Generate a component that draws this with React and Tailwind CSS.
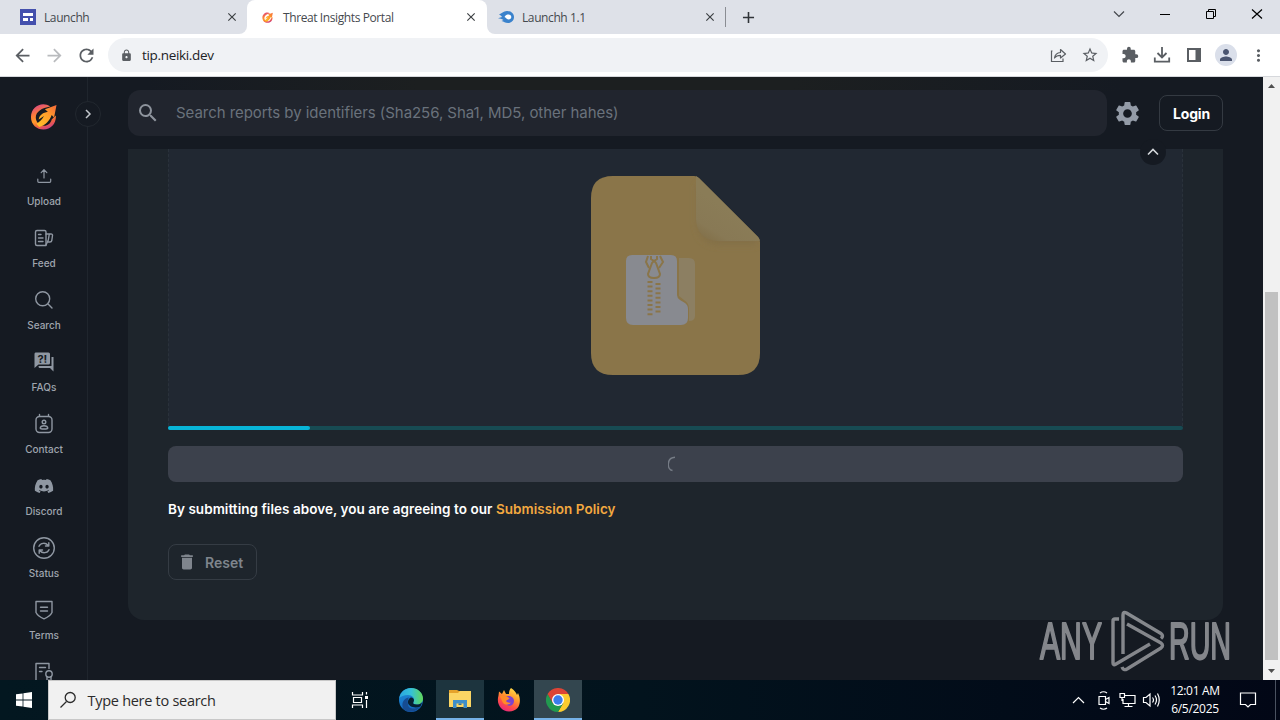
import {
  MdAdd,
  MdArrowBack,
  MdArrowForward,
  MdClose,
  MdDelete,
  MdExtension,
  MdLock,
  MdMoreVert,
  MdPerson,
  MdRefresh,
  MdSearch,
  MdSettings,
  MdStarBorder,
} from "react-icons/md";
import { FaDiscord } from "react-icons/fa";

const strokeProps = {
  fill: "none",
  stroke: "currentColor",
  strokeWidth: 1.4,
  strokeLinecap: "round",
  strokeLinejoin: "round",
};

function BrandMark({ size, id }) {
  return (
    <svg width={size} height={size} viewBox="0 0 28 28" aria-hidden="true">
      <defs>
        <linearGradient id={`${id}-ring`} x1="0.300" y1="0" x2="0.700" y2="1">
          <stop offset="0" stopColor="#dd4a80" />
          <stop offset="0.300" stopColor="#fb7a3c" />
          <stop offset="0.550" stopColor="#ff9a2a" />
          <stop offset="0.750" stopColor="#f0623f" />
          <stop offset="1" stopColor="#c93a8c" />
        </linearGradient>
        <linearGradient id={`${id}-arrow`} x1="0" y1="1" x2="1" y2="0">
          <stop offset="0" stopColor="#ffc229" />
          <stop offset="0.550" stopColor="#ffa02a" />
          <stop offset="1" stopColor="#f4663a" />
        </linearGradient>
      </defs>
      <path
        d="M21 3.500C12.500 -2 1 3.500 1 14.500C1 22.500 7 27.500 14 27.500C22 27.500 27.500 21 26.800 13L22.500 17C21.500 21 18.500 23.500 14.500 23.500C9.500 23.500 6 19.500 6 15C6 9 12 5 21 3.500Z"
        fill={`url(#${id}-ring)`}
      />
      <path
        d="M27.500 2L15.500 6.500L18.500 9C13.500 10 10 12 9 17L14.500 13.500C12.500 17 10 20 6.500 21.500L9.500 25C16 23.500 20.500 18 22.500 12.500L25 15Z"
        fill={`url(#${id}-arrow)`}
      />
    </svg>
  );
}

function SitesIcon() {
  return (
    <svg width="16" height="16" viewBox="0 0 16 16">
      <path d="M0 0H16V16H0Z" fill="#4450ad" />
      <path d="M3 4H13V7H3ZM3 9H8V12H3ZM10 9H13V12H10Z" fill="#fff" />
    </svg>
  );
}

function MediafireIcon() {
  return (
    <svg width="16" height="16" viewBox="0 0 16 16">
      <path
        d="M1 5.500C4 4.500 5 2.200 9 2C13 1.900 16 4.500 16 8C16 11.500 13.300 14 10 14C7 14 6 12.500 3.500 12L5.500 11C3.500 10 2 9.500 0 9.300L4 8C3 6.500 2.500 6 1 5.500Z"
        fill="#3a82cc"
      />
      <path d="M6.500 8C7.500 6 9 5.500 10.500 5.500C12.200 5.500 13.300 6.600 13.300 8C13.300 9.400 12.200 10.500 10.700 10.500C9 10.500 8.500 9 6.500 8Z" fill="#fff" />
    </svg>
  );
}

function Tab({ icon, title, className }) {
  return (
    <div className={`flex h-full items-center ${className}`}>
      <span className="flex w-4 shrink-0 justify-center">{icon}</span>
      <span className="ml-2 flex-1 whitespace-nowrap pt-px text-[12px] tracking-[-0.400px] text-[#45494e]">{title}</span>
      <MdClose className="size-[14px] text-[#3c4043]" />
    </div>
  );
}

function TabStrip() {
  return (
    <div className="flex h-[34px] bg-white">
      <Tab
        icon={<SitesIcon />}
        title="Launchh"
        className="w-[247px] rounded-br-lg bg-[#dee1e8] pl-5 pr-2"
      />
      <div className="h-full w-[240px] bg-[#dee1e8]">
        <Tab
          icon={<BrandMark size={11} id="tab" />}
          title="Threat Insights Portal"
          className="rounded-t-lg bg-white pl-3 pr-[9px]"
        />
      </div>
      <div className="flex flex-1 items-center rounded-bl-lg bg-[#dee1e8]">
        <Tab icon={<MediafireIcon />} title="Launchh 1.1" className="w-[230px] pl-[11px]" />
        <div className="ml-[8px] h-5 w-px bg-[#8a8d93]" />
        <MdAdd className="ml-[13px] size-[19px] text-[#303438]" />
        <div className="ml-auto flex h-7 items-center self-start text-black">
          <svg width="184" height="28" viewBox="0 0 184 28" fill="none" stroke="currentColor">
            <path d="M18 11.500L23 16.500L28 11.500" stroke="#44474c" strokeWidth="1.200" />
            <path d="M64 14.500H74" />
            <path d="M110.500 11.500H117.500V18.500H110.500ZM112.500 11V9.500H119.500V16.500H118" />
            <path d="M156 9.500L166 18.500M166 9.500L156 18.500" strokeWidth="1.200" />
          </svg>
        </div>
      </div>
    </div>
  );
}

function Toolbar() {
  return (
    <div className="flex h-[43px] items-center border-b border-[#d6d8dc] bg-white text-[#5a5e63]">
      <div className="flex w-[108px] items-center gap-[11px] pl-[11.500px]">
        <MdArrowBack className="size-[21px]" />
        <MdArrowForward className="size-[21px] text-[#b9bbbe]" />
        <MdRefresh className="size-[21px]" />
      </div>
      <div className="flex h-[34px] w-[1000px] items-center rounded-full bg-[#f0f2f5] pl-[11.500px] pr-[9px]">
        <MdLock className="size-[13px]" />
        <span className="ml-[9.500px] flex-1 text-[13.500px] tracking-[-0.330px] text-[#202124]">tip.neiki.dev</span>
        <svg width="18" height="18" viewBox="0 0 18 18" fill="none" stroke="currentColor" strokeWidth="1.200">
          <path d="M3.500 5H2.500V15.500H14V12.500" />
          <path d="M5.500 12C6 8.500 8 6.700 11.500 6.500V3.500L16.500 8L11.500 12V9.300C8.800 9.300 7 10 5.500 12Z" strokeLinejoin="round" />
        </svg>
        <MdStarBorder className="ml-[14px] size-[18px]" />
      </div>
      <div className="flex items-center pl-[13px]">
        <MdExtension className="size-[18px]" />
        <svg className="ml-[13px]" width="20" height="20" viewBox="0 0 20 20" fill="none" stroke="currentColor" strokeWidth="1.800">
          <path d="M10 2V12M5.500 8L10 12.500L14.500 8M2.800 12.500V16.700H17.200V12.500" />
        </svg>
        <svg className="ml-[14px]" width="16" height="16" viewBox="0 0 16 16">
          <path d="M1 1H15V15H1ZM3 3V13H9.500V3Z" fill="currentColor" fillRule="evenodd" />
        </svg>
        <span className="ml-[13px] flex size-[22px] items-center justify-center rounded-full bg-[#dadfea] text-[#4b5570]">
          <MdPerson className="size-[18px]" />
        </span>
        <MdMoreVert className="ml-[12px] size-[19px]" />
      </div>
    </div>
  );
}

function UploadIcon() {
  return (
    <svg width="22" height="22" viewBox="0 0 22 22" {...strokeProps} strokeWidth={1.2}>
      <path d="M11 13V5M8.200 7.700L11 4.700L13.800 7.700M4.800 14V16.300Q4.800 17.300 5.800 17.300H16.700Q17.700 17.300 17.700 16.300V14" />
    </svg>
  );
}

function FeedIcon() {
  return (
    <svg width="22" height="22" viewBox="0 0 22 22" {...strokeProps}>
      <path d="M4 3.500H11.500Q13 3.500 13 5V18.500H4Q2.500 18.500 2.500 17V5Q2.500 3.500 4 3.500Z" />
      <path d="M5.500 7.500H8M5.500 11H10M5.500 14.500H10M13 7H18Q19.700 7 19.500 8.500L18.800 13.500Q18.500 15 17 15H14.800M16.300 7L15.300 13L13 18" />
    </svg>
  );
}

function SearchIcon() {
  return (
    <svg width="22" height="22" viewBox="0 0 22 22" {...strokeProps}>
      <path d="M9.700 2.700A7 7 0 1 1 9.700 16.700A7 7 0 1 1 9.700 2.700ZM14.800 14.800L19 19" />
    </svg>
  );
}

function FaqIcon() {
  return (
    <svg width="22" height="22" viewBox="0 0 22 22">
      <path d="M2.500 1.500H15.500Q17 1.500 17 3V12Q17 13.500 15.500 13.500H5.500L1.500 17V3Q1.500 1.500 2.500 1.500Z" fill="currentColor" />
      <path d="M18.500 6H20.500V20.500L17 17H6.500Q5.500 17 5.500 15H18.500Z" fill="currentColor" />
      <text x="9.400" y="11.500" textAnchor="middle" fontSize="11" fontWeight="700" fontFamily="Inter, sans-serif" fill="#161b22">
        ?!
      </text>
    </svg>
  );
}

function ContactIcon() {
  return (
    <svg width="22" height="22" viewBox="0 0 22 22" {...strokeProps}>
      <rect x="3" y="3.500" width="16" height="16" rx="3.500" />
      <path d="M6.500 1.500V3M15.500 1.500V3" />
      <circle cx="11" cy="9" r="1.800" />
      <path d="M7.200 15Q7.500 12.700 11 12.700Q14.500 12.700 14.800 15Q14.500 16 11 16Q7.500 16 7.200 15Z" />
    </svg>
  );
}

function StatusIcon() {
  return (
    <svg width="24" height="24" viewBox="0 0 24 24" {...strokeProps}>
      <circle cx="12" cy="12" r="10.300" />
      <path d="M7 10.300C8.500 6.700 13.500 6.300 16 9.300M16.800 6.700V10H13.500M17 13.700C15.500 17.300 10.500 17.700 8 14.700M7.200 17.300V14H10.500" />
    </svg>
  );
}

function TermsIcon() {
  return (
    <svg width="22" height="22" viewBox="0 0 22 22" {...strokeProps}>
      <path d="M3 2.500H19V13.500Q17 17.500 11 19.800Q5 17.500 3 13.500ZM7.500 8.200H14.500M7.500 12H14.500" />
    </svg>
  );
}

function LicenseIcon() {
  return (
    <svg width="22" height="22" viewBox="0 0 22 22" {...strokeProps}>
      <path d="M9 20.500H3V2.500H16V7.500M6.500 6.500H12.500M6.500 10.500H9" />
      <circle cx="16" cy="13" r="3.200" />
      <path d="M14 15.500V20.500L16 19L18 20.500V15.500" />
    </svg>
  );
}

const navItems = [
  { label: "Upload", icon: <UploadIcon /> },
  { label: "Feed", icon: <FeedIcon /> },
  { label: "Search", icon: <SearchIcon /> },
  { label: "FAQs", icon: <FaqIcon /> },
  { label: "Contact", icon: <ContactIcon /> },
  { label: "Discord", icon: <FaDiscord size={20} /> },
  { label: "Status", icon: <StatusIcon /> },
  { label: "Terms", icon: <TermsIcon /> },
  { label: "", icon: <LicenseIcon /> },
];

function Sidebar() {
  return (
    <aside className="relative z-10 flex w-[88px] shrink-0 flex-col items-center border-r border-[#1f252d] bg-[#151a22] text-[#8f97a2]">
      <div className="flex h-[87px] shrink-0 items-center pb-[8px]">
        <BrandMark size={27} id="side" />
      </div>
      {navItems.map((item, index) => (
        <div key={index} className="flex h-[62px] w-full shrink-0 flex-col items-center">
          <span className="flex h-6 items-center">{item.icon}</span>
          <span className="mt-[6px] pl-px text-[10px] font-medium leading-[14px] text-[#9fa5ae]">{item.label}</span>
        </div>
      ))}
      <button className="absolute -right-[14px] top-6 flex size-[26px] items-center justify-center rounded-full border border-[#22282f] bg-[#151a22]">
        <svg width="12" height="12" viewBox="0 0 12 12" fill="none" stroke="#c3c7cc" strokeWidth="1.500">
          <path d="M4 2L8 6L4 10" />
        </svg>
      </button>
    </aside>
  );
}

function SearchHeader() {
  return (
    <header className="flex h-[72px] items-start bg-[#151a22] bg-[linear-gradient(to_right,transparent_5%,#1c1f20_28%,#1c1f20_60%,transparent_88%)] bg-[length:100%_14px] bg-no-repeat pl-10 pt-[13px]">
      <div className="flex h-[46px] w-[979px] items-center rounded-xl bg-[#21252e] pl-2">
        <MdSearch className="size-6 text-[#8e949d]" />
        <span className="ml-4 text-[15px] tracking-[-0.050px] text-[#6a727c]">
          Search reports by identifiers (Sha256, Sha1, MD5, other hahes)
        </span>
      </div>
      <MdSettings className="ml-[6px] mt-[9px] size-[29px] text-[#939ba7]" />
      <button className="ml-[17px] mt-[5px] h-9 w-16 rounded-lg border border-[#343a42] pl-px text-[14px] font-bold tracking-[-0.150px] text-white">
        Login
      </button>
    </header>
  );
}

function ArchiveFile() {
  return (
    <svg width="169" height="199" viewBox="0 0 169 199">
      <defs>
        <linearGradient id="fold" x1="0.500" y1="0.500" x2="0.200" y2="1">
          <stop offset="0" stopColor="#8a7c57" />
          <stop offset="0.700" stopColor="#887955" />
          <stop offset="1" stopColor="#83714a" />
        </linearGradient>
        <filter id="foldShade" x="-20%" y="-20%" width="140%" height="150%">
          <feGaussianBlur stdDeviation="3" />
        </filter>
        <clipPath id="sheet">
          <path d="M22 0H103Q106 0 108 2L167 61Q169 63 169 66V177Q169 199 147 199H22Q0 199 0 177V22Q0 0 22 0Z" />
        </clipPath>
      </defs>
      <g clipPath="url(#sheet)">
        <path d="M0 0H169V199H0Z" fill="#8a7549" />
        <path d="M106 8V46Q107 69 130 69H165L167 61Z" fill="#837046" filter="url(#foldShade)" />
        <path d="M105 0V43Q106 64 127 65H169V62L106 0Z" fill="url(#fold)" />
      </g>
      <path d="M88 82H98Q104 82 104 88V140Q104 145 98 145V133Q98 127 93 124L88 120Z" fill="#8c7f62" />
      <path
        d="M41 79H80Q86 79 86 85V119Q86 122 89 124L94 127Q97 129 97 133V142Q97 149 90 149H42Q35 149 35 142V85Q35 79 41 79Z"
        fill="#888a90"
      />
      <g fill="none" stroke="#8a7549" strokeWidth="2">
        <path d="M57 80L55 86L58 92M69 80L72 86L68 92M60 80V83L63 85L66 83V80" />
        <path d="M61 87L57 98Q57 102 63 102Q69 102 69 98L65 87Q63 84 61 87Z" />
        <path d="M59 105V141M67 107V139" strokeWidth="5" strokeDasharray="2 2.600" />
      </g>
    </svg>
  );
}

function UploadCard() {
  return (
    <section className="ml-10 flex h-[471px] w-[1095px] flex-col rounded-b-2xl bg-[#1e252c] px-10">
      <div className="flex h-[277px] items-start justify-center border-x border-dashed border-[#2a323b] bg-[#212832] pt-[27px]">
        <ArchiveFile />
      </div>
      <div className="h-1 rounded-sm bg-[#174b53]">
        <div className="h-1 w-[142px] rounded-sm bg-[#08b5d8]" />
      </div>
      <div className="mt-4 flex h-9 items-center justify-center rounded-lg bg-[#3c414c]">
        <svg width="16" height="16" viewBox="0 0 16 16" fill="none" stroke="#767c86" strokeWidth="1.500">
          <path d="M7 1.200C-1.500 1.500 -1.500 13.500 4.500 14.500" />
        </svg>
      </div>
      <p className="mt-[17px] text-[13.500px] font-semibold leading-5 tracking-[0.050px] text-white">
        By submitting files above, you are agreeing to our <a className="text-[#f3a940]">Submission Policy</a>
      </p>
      <button className="mt-[25px] flex h-9 w-[89px] items-center rounded-lg border border-[#353c44] pl-[8px] text-[14px] font-semibold text-[#7f858d]">
        <MdDelete className="size-5" />
        <span className="ml-2">Reset</span>
      </button>
    </section>
  );
}

function Watermark() {
  return (
    <svg className="absolute bottom-[8px] right-[22px]" width="202" height="62" viewBox="0 0 202 62" opacity="0.500" fill="#f2f2f4">
      <g fontSize="51" fontFamily="'Liberation Sans', sans-serif" stroke="#f2f2f4" strokeWidth="2" strokeLinejoin="round">
        <text x="1" y="49" textLength="62" lengthAdjust="spacingAndGlyphs">ANY</text>
        <text x="130" y="49" textLength="62" lengthAdjust="spacingAndGlyphs">RUN</text>
      </g>
      <g fill="none" stroke="#f2f2f4" strokeWidth="3.400" strokeLinejoin="round">
        <path d="M80 9H76Q74 9 74 11V53Q74 56 77 54L111 34" />
        <path d="M84 44V5Q84 1 87.500 3L122 23.500Q125 26 122 28.500" />
        <path d="M88 14L122 33Q125 35.500 122 38L88 59Q84.500 61 83 57" />
      </g>
    </svg>
  );
}

function Scrollbar() {
  return (
    <div className="flex w-[17px] shrink-0 flex-col items-center bg-[#f1f1f1]">
      <svg width="17" height="17" viewBox="0 0 17 17">
        <path d="M5 11L8.500 7L12 11Z" fill="#505050" />
      </svg>
      <div className="mt-[198px] h-[368px] w-[13px] bg-[#c1c1c1]" />
      <svg className="mt-auto" width="17" height="17" viewBox="0 0 17 17">
        <path d="M5 6L8.500 10L12 6Z" fill="#505050" />
      </svg>
    </div>
  );
}

function TaskViewIcon() {
  return (
    <svg width="18" height="18" viewBox="0 0 18 18" fill="none" stroke="#fff" strokeWidth="1.200">
      <path d="M1.500 1V4H11.500V1M1.500 17V14H11.500V17M2.500 6.500H10.500V11.500H2.500ZM15.500 1V3.500M15.500 9V17" />
      <path d="M14 5H17V8H14Z" fill="#fff" stroke="none" />
    </svg>
  );
}

function EdgeIcon() {
  return (
    <svg width="24" height="24" viewBox="0 0 24 24">
      <defs>
        <linearGradient id="edgeTop" x1="0" y1="0.500" x2="1" y2="0.500">
          <stop offset="0" stopColor="#2aa5e0" />
          <stop offset="0.500" stopColor="#35c1d8" />
          <stop offset="1" stopColor="#62d957" />
        </linearGradient>
        <linearGradient id="edgeSide" x1="0" y1="0" x2="0.300" y2="1">
          <stop offset="0" stopColor="#1f8fd8" />
          <stop offset="1" stopColor="#1467c0" />
        </linearGradient>
      </defs>
      <circle cx="12" cy="12" r="12" fill="url(#edgeSide)" />
      <path d="M9 16C9 21 15 22 21.500 18.500C17 25 8 25.500 4 20.500C2 15 5 10 10 9.500C8.500 11.500 8.500 14 9 16Z" fill="#164c92" />
      <path d="M0.200 10C1.500 3.500 6.500 0 12 0C19 0 24 5 24 10.500C24 14.500 21 16.500 17.500 16.500C14.500 16.500 13.500 15.500 14.500 14C16.500 10 13 7 9 7C5 7 1.500 8.500 0.200 10Z" fill="url(#edgeTop)" />
      <path d="M14.500 14C13.500 15.500 14.500 16.500 17.500 16.500C20 16.500 22 15.700 23.200 14.200L21.500 18.500C16 20.500 10 19 9 15C8.600 12 10.500 9.500 12.500 9.500C15 10 15.500 12 14.500 14Z" fill="#071f31" />
    </svg>
  );
}

function ExplorerIcon() {
  return (
    <svg width="22" height="20" viewBox="0 0 22 20">
      <path d="M0 1H8L10 2H22V6H0Z" fill="#e5a32c" />
      <path d="M0 4L9 4L11 2H22V18H0Z" fill="#fbd564" />
      <path d="M4 11H18V19H14.500V14.500H7.500V19H4Z" fill="#3d8ecb" />
      <path d="M9.500 14.500H12.500V16H9.500Z" fill="#2d6da1" />
    </svg>
  );
}

function FirefoxIcon() {
  return (
    <svg width="24" height="24" viewBox="0 0 24 24">
      <defs>
        <linearGradient id="fox" x1="0.800" y1="0" x2="0.300" y2="1">
          <stop offset="0" stopColor="#ffe34a" />
          <stop offset="0.400" stopColor="#ff9a2e" />
          <stop offset="0.700" stopColor="#ff4f45" />
          <stop offset="1" stopColor="#e9257d" />
        </linearGradient>
      </defs>
      <path d="M14 0C17 2 19 4 20 7L21 5C25 13 23 23.500 12 23.500C4 23.500 -1 16 1.500 7.500L2 3.500L5 6L7 2L9 6L12 6C12 3.500 12.500 1.500 14 0Z" fill="url(#fox)" />
      <path d="M8 9C11 7 17 8 17 13C17 17 13.500 18.500 11 17.500C8 16.500 7 14.500 7 12L11 12Z" fill="#7a42d0" />
      <path d="M3 8C7 6.500 10 8 12.500 10.500C11 12 10 11.500 9 13C10 14.500 12 15 14 14.500C11.500 18 7 17 5.500 14Z" fill="#ff8b27" />
    </svg>
  );
}

function ChromeIcon() {
  return (
    <svg width="24" height="24" viewBox="0 0 24 24">
      <path d="M12 6H22.400A12 12 0 0 1 12 24L17.200 15Z" fill="#fccb2f" />
      <path d="M1.600 6L6.800 15L12 18L17.200 15L12 24A12 12 0 0 1 1.600 6Z" fill="#22994f" />
      <path d="M22.400 6A12 12 0 0 0 1.600 6L6.800 15L12 6Z" fill="#dd4436" />
      <circle cx="12" cy="12" r="6" fill="#fff" />
      <circle cx="12" cy="12" r="4.700" fill="#3b7ded" />
    </svg>
  );
}

function TrayIcons() {
  return (
    <svg width="92" height="24" viewBox="0 0 92 24" fill="none" stroke="#fff" strokeWidth="1.200">
      <path d="M4 15L9.500 9.500L15 15" />
      <path d="M30 8.500H36.500V16.500H30ZM36.500 11.500L40 9.500V15.500L36.500 13.500M31 5Q34.500 2.500 38 5M31 20Q34.500 22.500 38 20" />
      <path d="M56 7.500H66V15.500H54V11M59.500 15.500V18.500M55.500 18.500H63.500M51 5.500H55.500V9.500H51ZM53 9.500V13" />
      <path d="M74.500 9.500H77L81 6V18L77 14.500H74.500ZM83.500 9.500Q85.500 12 83.500 14.500M86 7.500Q89 12 86 16.500M88.500 5.500Q92 12 88.500 18.500" />
    </svg>
  );
}

function Taskbar() {
  return (
    <footer className="flex h-10 bg-gradient-to-r from-[#031720] via-[#02131d] to-[#020716] text-white">
      <div className="flex w-12 items-center justify-center">
        <svg width="16" height="16" viewBox="0 0 16 16" fill="#fff">
          <path d="M0 2.300L6.600 1.400V7.600H0ZM7.400 1.300L16 0V7.600H7.400ZM0 8.400H6.600V14.600L0 13.700ZM7.400 8.400H16V16L7.400 14.700Z" />
        </svg>
      </div>
      <div className="flex w-[288px] items-center border border-[#c8c8c8] bg-[#f1f1f1] pl-[10px] text-[#2b2b2b]">
        <svg width="18" height="18" viewBox="0 0 18 18" fill="none" stroke="currentColor" strokeWidth="1.300">
          <circle cx="11.200" cy="6.500" r="5" />
          <path d="M7.500 10.500L1.500 16.500" />
        </svg>
        <span className="ml-[10.500px] pt-px text-[14.500px] tracking-[-0.280px]">Type here to search</span>
      </div>
      <div className="flex w-12 items-center justify-center"><TaskViewIcon /></div>
      <div className="flex w-[52px] items-center justify-center pl-[2px]"><EdgeIcon /></div>
      <div className="flex w-12 items-center justify-center border-b-2 border-[#76b2e8] bg-[#1d343e]"><ExplorerIcon /></div>
      <div className="flex w-[50px] items-center justify-center"><FirefoxIcon /></div>
      <div className="flex w-12 items-center justify-center border-b-2 border-[#76b2e8] bg-[#33464f] pt-[2px]"><ChromeIcon /></div>
      <div className="ml-auto flex items-center">
        <TrayIcons />
        <div className="w-[67px] pl-px text-center text-[12px] leading-[18px] tracking-[-0.300px]">
          <div>12:01 AM</div>
          <div>6/5/2025</div>
        </div>
        <svg className="ml-[10.500px]" width="18" height="18" viewBox="0 0 18 18" fill="none" stroke="#fff" strokeWidth="1.200">
          <path d="M1.500 2H16.500V13.500H11.500L9 16L6.500 13.500H1.500Z" />
        </svg>
        <div className="ml-[18.500px] mr-1 h-10 w-px bg-[#4a5260]" />
      </div>
    </footer>
  );
}

export default function App() {
  return (
    <div className="flex h-[720px] w-[1280px] flex-col overflow-hidden font-['Open_Sans','Noto_Sans',sans-serif]">
      <TabStrip />
      <Toolbar />
      <div className="flex h-[603px] overflow-hidden bg-[#151a22] font-['Inter',sans-serif]">
        <Sidebar />
        <main className="relative flex-1">
          <SearchHeader />
          <UploadCard />
          <button className="absolute left-[1052px] top-[62px] flex size-[26px] items-center justify-center rounded-full bg-[#151a22]">
            <svg width="14" height="14" viewBox="0 0 14 14" fill="none" stroke="#d5d8dc" strokeWidth="1.600">
              <path d="M2 9.500L7 4.500L12 9.500" />
            </svg>
          </button>
          <Watermark />
        </main>
        <Scrollbar />
      </div>
      <Taskbar />
    </div>
  );
}
